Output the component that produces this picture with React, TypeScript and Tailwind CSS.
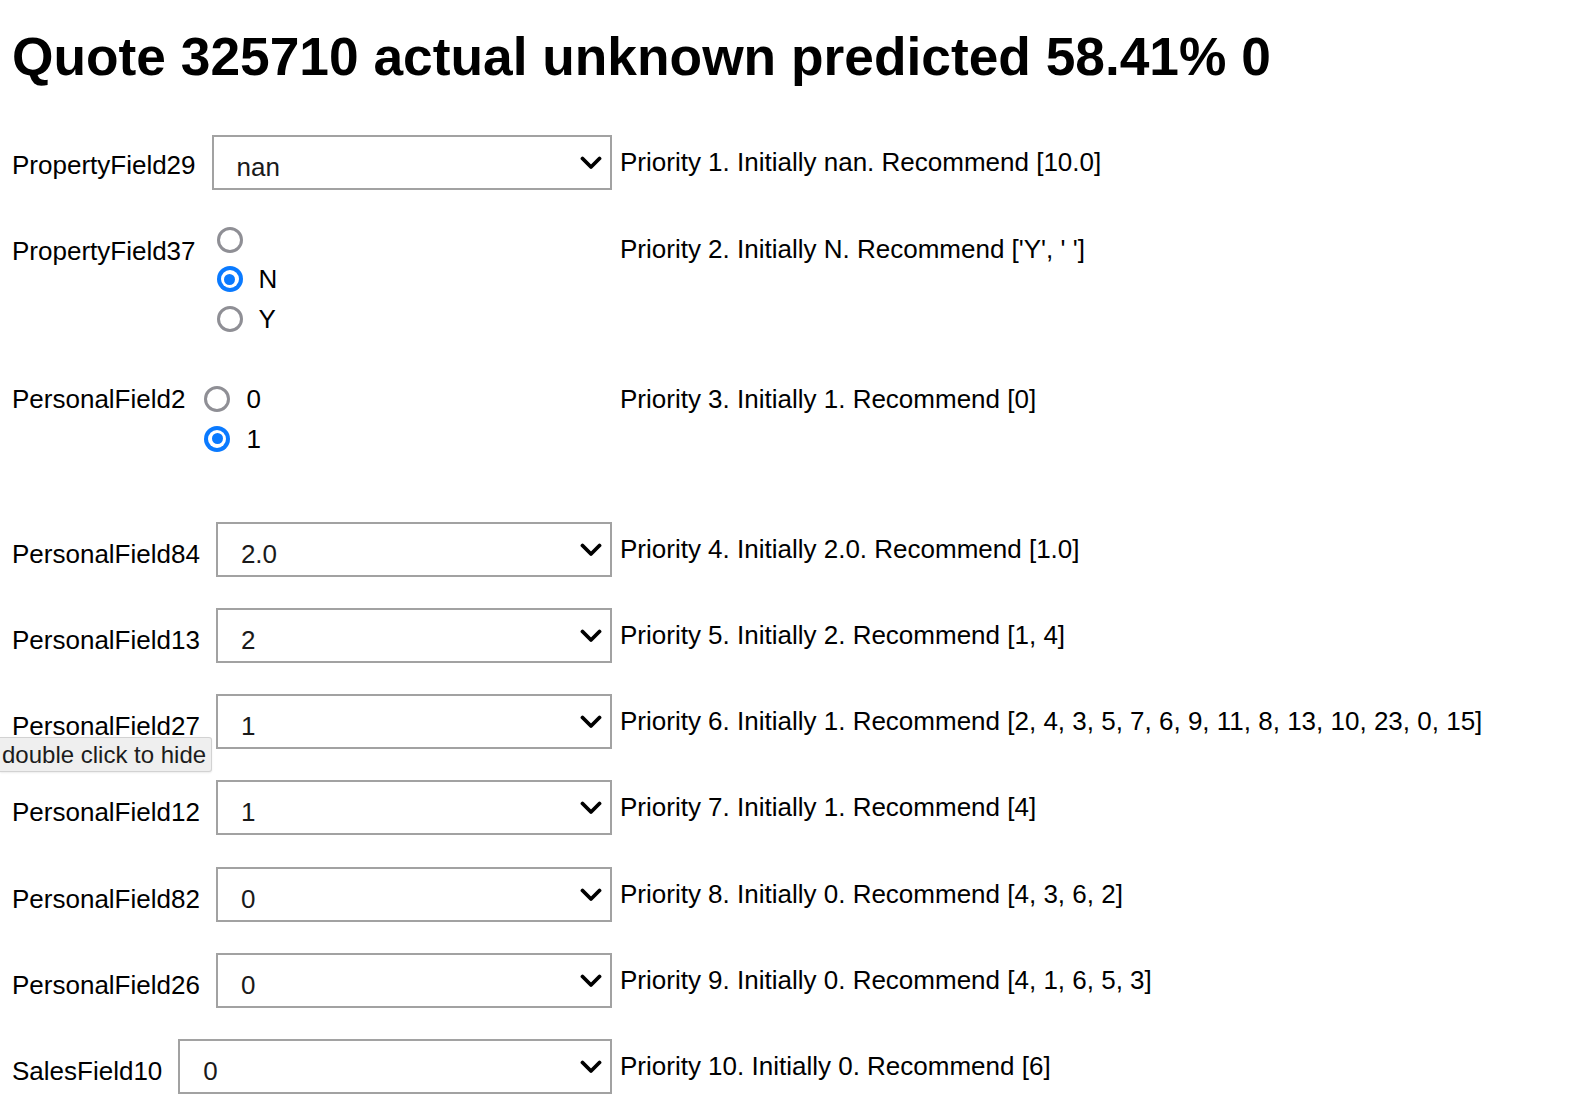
import React from "react";

const font = "font-['Liberation_Sans','Helvetica','Arial',sans-serif]";

function Chevron() {
  return (
    <svg width="22" height="14" viewBox="0 0 22 14" className="shrink-0">
      <polyline points="2.5,2.5 11,11 19.5,2.5" fill="none" stroke="#000" strokeWidth="3.8" strokeLinecap="round" strokeLinejoin="round" />
    </svg>
  );
}

function SelectRow({
  label,
  value,
  text,
  last,
  labelTop = "mt-[17px]",
}: {
  label: string;
  value: string;
  text: string;
  last?: boolean;
  labelTop?: string;
}) {
  return (
    <div className={`flex items-start ${last ? "" : "mb-[31.3px]"}`}>
      <div className="flex w-[600px] shrink-0 items-start">
        <span className={`${labelTop} shrink-0 whitespace-nowrap leading-[30px]`}>{label}</span>
        <div className="ml-[16px] flex h-[55px] flex-1 items-start justify-between border-2 border-[#a2a2a2] bg-white pl-[23px] pr-[8px]">
          <span className="mt-[15px] leading-[30px] text-[#1a1a1a]">{value}</span>
          <div className="mt-[19px]">
            <Chevron />
          </div>
        </div>
      </div>
      <span className="ml-[8px] mt-[12px] whitespace-nowrap leading-[30px]">{text}</span>
    </div>
  );
}

function Radio({ checked, label }: { checked?: boolean; label: string }) {
  return (
    <div className="flex h-[39.5px] items-center">
      {checked ? (
        <span className="flex h-[26px] w-[26px] shrink-0 items-center justify-center rounded-full bg-[#0a7aff]">
          <span className="flex h-[18px] w-[18px] items-center justify-center rounded-full bg-white">
            <span className="h-[11px] w-[11px] rounded-full bg-[#0a7aff]" />
          </span>
        </span>
      ) : (
        <span className="h-[26px] w-[26px] shrink-0 rounded-full border-[3px] border-[#8f8f95] bg-white" />
      )}
      <span className="ml-[16px] leading-[30px]">{label}</span>
    </div>
  );
}

export default function App() {
  return (
    <div className={`${font} relative min-h-[1108px] bg-white pl-[12px] text-[26px] text-black`}>
      <h1 className="pt-[27px] text-[53.3px] font-bold leading-[60px] whitespace-nowrap">
        Quote 325710 actual unknown predicted 58.41% 0
      </h1>

      <div className="mt-[48px]">
        <SelectRow
          label="PropertyField29"
          value="nan"
          text="Priority 1. Initially nan. Recommend [10.0]"
          labelTop="mt-[15px]"
          last
        />

        {/* PropertyField37 radios */}
        <div className="mt-[30px] flex items-start">
          <div className="flex w-[600px] shrink-0 items-start">
            <span className="mt-[16px] leading-[30px]">PropertyField37</span>
            <div className="ml-[21px] flex flex-col">
              <Radio label="" />
              <Radio checked label="N" />
              <Radio label="Y" />
            </div>
          </div>
          <span className="ml-[8px] mt-[14px] whitespace-nowrap leading-[30px]">
            Priority 2. Initially N. Recommend ['Y', ' ']
          </span>
        </div>

        {/* PersonalField2 radios */}
        <div className="mt-[41px] flex items-start">
          <div className="flex w-[600px] shrink-0 items-start">
            <span className="mt-[4.5px] leading-[30px]">PersonalField2</span>
            <div className="ml-[19px] flex flex-col">
              <Radio label="0" />
              <Radio checked label="1" />
            </div>
          </div>
          <span className="ml-[8px] mt-[4.5px] whitespace-nowrap leading-[30px]">
            Priority 3. Initially 1. Recommend [0]
          </span>
        </div>

        <div className="mt-[63px]">
          <SelectRow label="PersonalField84" value="2.0" text="Priority 4. Initially 2.0. Recommend [1.0]" />
          <SelectRow label="PersonalField13" value="2" text="Priority 5. Initially 2. Recommend [1, 4]" />
          <SelectRow
            label="PersonalField27"
            value="1"
            text="Priority 6. Initially 1. Recommend [2, 4, 3, 5, 7, 6, 9, 11, 8, 13, 10, 23, 0, 15]"
          />
          <SelectRow label="PersonalField12" value="1" text="Priority 7. Initially 1. Recommend [4]" />
          <SelectRow label="PersonalField82" value="0" text="Priority 8. Initially 0. Recommend [4, 3, 6, 2]" />
          <SelectRow label="PersonalField26" value="0" text="Priority 9. Initially 0. Recommend [4, 1, 6, 5, 3]" />
          <SelectRow label="SalesField10" value="0" text="Priority 10. Initially 0. Recommend [6]" last />
        </div>
      </div>

      <div className="absolute left-0 top-[737px] flex h-[35px] w-[212px] items-center rounded-r-[3px] border border-l-0 border-[#d2d2d2] bg-[#efefef] pl-[2px] text-[24px] leading-[28px] text-[#1c1c1c] shadow-[0_1px_2px_rgba(0,0,0,0.08)]">
        double click to hide
      </div>
    </div>
  );
}
